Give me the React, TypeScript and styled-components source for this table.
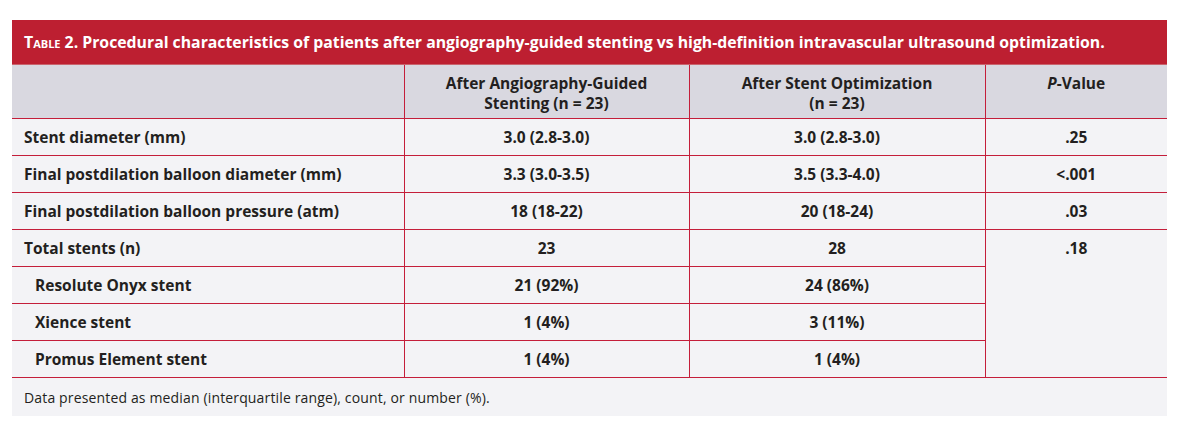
import React from "react";
import styled, { createGlobalStyle } from "styled-components";

const Global = createGlobalStyle`
  html, body { margin: 0; padding: 0; background: #ffffff; }
  body { font-family: "Open Sans", "Liberation Sans", sans-serif; color: #231f20; }
`;

const Page = styled.div`
  padding: 20px 11px 16px 12px;
`;

const Frame = styled.div`
  width: 1155px;
  background: #f3f3f6;
`;

const Title = styled.div`
  background: #bd1f31;
  color: #ffffff;
  height: 45px;
  display: flex;
  align-items: center;
  padding: 0 12px;
  font-size: 15.8px;
  font-weight: 700;
  border-bottom: 1px solid #c9636d;
  box-sizing: border-box;
`;

const Caps = styled.span`
  font-variant: small-caps;
`;

const Table = styled.table`
  width: 1155px;
  border-collapse: collapse;
  table-layout: fixed;
`;

const HeadCell = styled.th`
  background: #d9d8e0;
  height: 45px;
  padding: 8px 8px 0;
  vertical-align: top;
  text-align: center;
  font-size: 15.5px;
  line-height: 20px;
  font-weight: 700;
  border-bottom: 1px solid #c41e3a;
  & + & { border-left: 1px solid #c41e3a; }
`;

const Cell = styled.td<{ $indent?: boolean; $left?: boolean; $top?: boolean }>`
  height: 36px;
  padding: 0 ${(p) => (p.$indent ? "12px 0 23px" : p.$left ? "12px 0 12px" : "8px")};
  text-align: ${(p) => (p.$left || p.$indent ? "left" : "center")};
  vertical-align: ${(p) => (p.$top ? "top" : "middle")};
  ${(p) => (p.$top ? "padding-top: 8px;" : "")}
  font-size: 15.5px;
  line-height: 20px;
  font-weight: 700;
  border-bottom: 1px solid #c41e3a;
  & + & { border-left: 1px solid #c41e3a; }
`;

const Note = styled.div`
  height: 38px;
  display: flex;
  align-items: center;
  padding: 0 12px;
  font-size: 14px;
  letter-spacing: 0.15px;
  font-weight: 400;
`;

type Row = { label: string; a: string; b: string; p?: string; indent?: boolean; span?: number; skipP?: boolean };

const rows: Row[] = [
  { label: "Stent diameter (mm)", a: "3.0 (2.8-3.0)", b: "3.0 (2.8-3.0)", p: ".25" },
  { label: "Final postdilation balloon diameter (mm)", a: "3.3 (3.0-3.5)", b: "3.5 (3.3-4.0)", p: "<.001" },
  { label: "Final postdilation balloon pressure (atm)", a: "18 (18-22)", b: "20 (18-24)", p: ".03" },
  { label: "Total stents (n)", a: "23", b: "28", p: ".18", span: 4 },
  { label: "Resolute Onyx stent", a: "21 (92%)", b: "24 (86%)", indent: true, skipP: true },
  { label: "Xience stent", a: "1 (4%)", b: "3 (11%)", indent: true, skipP: true },
  { label: "Promus Element stent", a: "1 (4%)", b: "1 (4%)", indent: true, skipP: true },
];

export default function App() {
  return (
    <>
      <Global />
      <Page>
        <Frame>
          <Title>
            <span>
              <Caps>Table</Caps> 2. Procedural characteristics of patients after angiography-guided stenting vs
              high-definition intravascular ultrasound optimization.
            </span>
          </Title>
          <Table>
            <colgroup>
              <col style={{ width: 392 }} />
              <col style={{ width: 285 }} />
              <col style={{ width: 296 }} />
              <col style={{ width: 182 }} />
            </colgroup>
            <thead>
              <tr>
                <HeadCell />
                <HeadCell>
                  After Angiography-Guided
                  <br />
                  Stenting (n = 23)
                </HeadCell>
                <HeadCell>
                  After Stent Optimization
                  <br />
                  (n = 23)
                </HeadCell>
                <HeadCell>
                  <i>P</i>-Value
                </HeadCell>
              </tr>
            </thead>
            <tbody>
              {rows.map((r) => (
                <tr key={r.label}>
                  <Cell $left={!r.indent} $indent={r.indent}>
                    {r.label}
                  </Cell>
                  <Cell>{r.a}</Cell>
                  <Cell>{r.b}</Cell>
                  {!r.skipP && (
                    <Cell rowSpan={r.span} $top={!!r.span}>
                      {r.p}
                    </Cell>
                  )}
                </tr>
              ))}
            </tbody>
          </Table>
          <Note>Data presented as median (interquartile range), count, or number (%).</Note>
        </Frame>
      </Page>
    </>
  );
}
